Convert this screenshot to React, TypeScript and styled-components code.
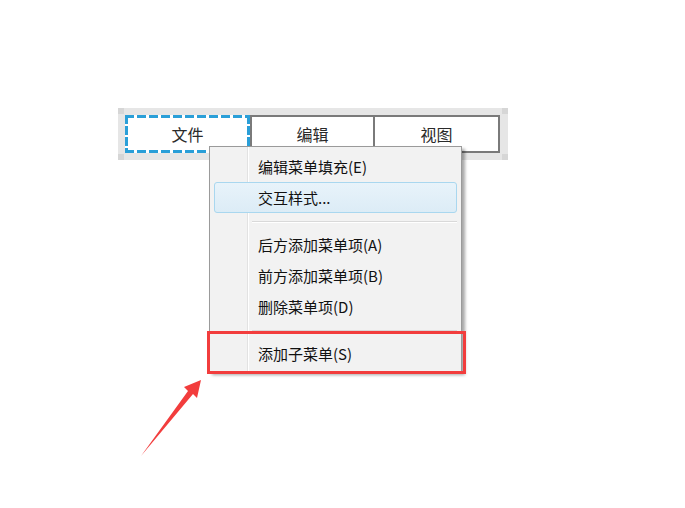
import styled, { createGlobalStyle } from 'styled-components'

const GlobalStyle = createGlobalStyle`
  html, body {
    margin: 0;
    padding: 0;
    background: #ffffff;
  }
  body {
    font-family: "Noto Sans CJK SC", "Noto Sans", sans-serif;
  }
`

const Page = styled.div`
  position: relative;
  width: 685px;
  height: 508px;
  padding: 108px 0 0 118px;
  box-sizing: border-box;
  overflow: hidden;
`

const MenuBar = styled.div`
  position: relative;
  display: flex;
  width: 390px;
  height: 52px;
  padding: 7px 8px 7px 7px;
  box-sizing: border-box;
  background:
    linear-gradient(#d6d6d6, #d6d6d6) left top / 6px 6px no-repeat,
    linear-gradient(#d6d6d6, #d6d6d6) left bottom / 6px 6px no-repeat,
    linear-gradient(#d6d6d6, #d6d6d6) right top / 6px 6px no-repeat,
    linear-gradient(#d6d6d6, #d6d6d6) right bottom / 6px 6px no-repeat,
    #e6e6e6;
`

const dash = '#2a9fd8'

const Tab = styled.div<{ $focused?: boolean; $first?: boolean }>`
  width: 125px;
  height: 38px;
  box-sizing: border-box;
  display: flex;
  align-items: center;
  justify-content: center;
  font-size: 16px;
  color: #2a2a2a;
  background-color: #ffffff;
  border-style: solid;
  border-color: #7a7a7a;
  border-width: ${(p) => (p.$focused ? '0' : p.$first ? '2px' : '2px 2px 2px 0')};
  ${(p) =>
    p.$focused &&
    `
    background:
      repeating-linear-gradient(90deg, ${dash} 0 9px, transparent 9px 12px) left top / 100% 3px no-repeat,
      repeating-linear-gradient(90deg, ${dash} 0 9px, transparent 9px 12px) left bottom / 100% 3px no-repeat,
      repeating-linear-gradient(180deg, ${dash} 0 9px, transparent 9px 11px) left top / 3px 100% no-repeat,
      repeating-linear-gradient(180deg, ${dash} 0 9px, transparent 9px 11px) right top / 3px 100% no-repeat,
      #ffffff;
  `}
`

const Dropdown = styled.div`
  position: absolute;
  left: 91px;
  top: 38px;
  width: 253px;
  padding: 4px 0 2px;
  box-sizing: border-box;
  background:
    linear-gradient(90deg, transparent 37px, #e2e2e2 37px 38px, #ffffff 38px 39px, transparent 39px),
    #f2f2f2;
  border: 1px solid #9a9a9a;
  box-shadow: 3px 3px 3px rgba(0, 0, 0, 0.35);
  z-index: 2;
`

const Item = styled.div<{ $active?: boolean }>`
  height: 31px;
  margin: 0 4px;
  padding-left: 43px;
  box-sizing: border-box;
  display: flex;
  align-items: center;
  font-size: 15px;
  color: #111111;
  border-radius: 3px;
  border: 1px solid ${(p) => (p.$active ? '#a9d7ef' : 'transparent')};
  background: ${(p) => (p.$active ? 'linear-gradient(#e8f3fa, #dcecf6)' : 'transparent')};
`

const Separator = styled.div`
  height: 16px;
  display: flex;
  align-items: center;
  padding: 0 4px 0 42px;

  &::after {
    content: '';
    flex: 1;
    height: 1px;
    background: #d9d9d9;
    box-shadow: 0 1px 0 #ffffff;
  }
`

const Callout = styled.div`
  position: absolute;
  left: 207px;
  top: 331px;
  width: 259px;
  height: 43px;
  box-sizing: border-box;
  border: 3px solid #f23d3d;
  z-index: 3;
`

const ArrowLayer = styled.svg`
  position: absolute;
  left: 0;
  top: 0;
  width: 685px;
  height: 508px;
  pointer-events: none;
  z-index: 3;
`

export default function App() {
  return (
    <>
      <GlobalStyle />
      <Page>
        <MenuBar>
          <Tab $focused>文件</Tab>
          <Tab $first>编辑</Tab>
          <Tab>视图</Tab>
          <Dropdown>
            <Item>编辑菜单填充(E)</Item>
            <Item $active>交互样式...</Item>
            <Separator />
            <Item>后方添加菜单项(A)</Item>
            <Item>前方添加菜单项(B)</Item>
            <Item>删除菜单项(D)</Item>
            <Separator />
            <Item>添加子菜单(S)</Item>
          </Dropdown>
        </MenuBar>
        <Callout />
        <ArrowLayer viewBox="0 0 685 508">
          <polygon
            points="141,456 188,391 184,387 201,380 197,398 193,394"
            fill="#f23d3d"
          />
        </ArrowLayer>
      </Page>
    </>
  )
}
